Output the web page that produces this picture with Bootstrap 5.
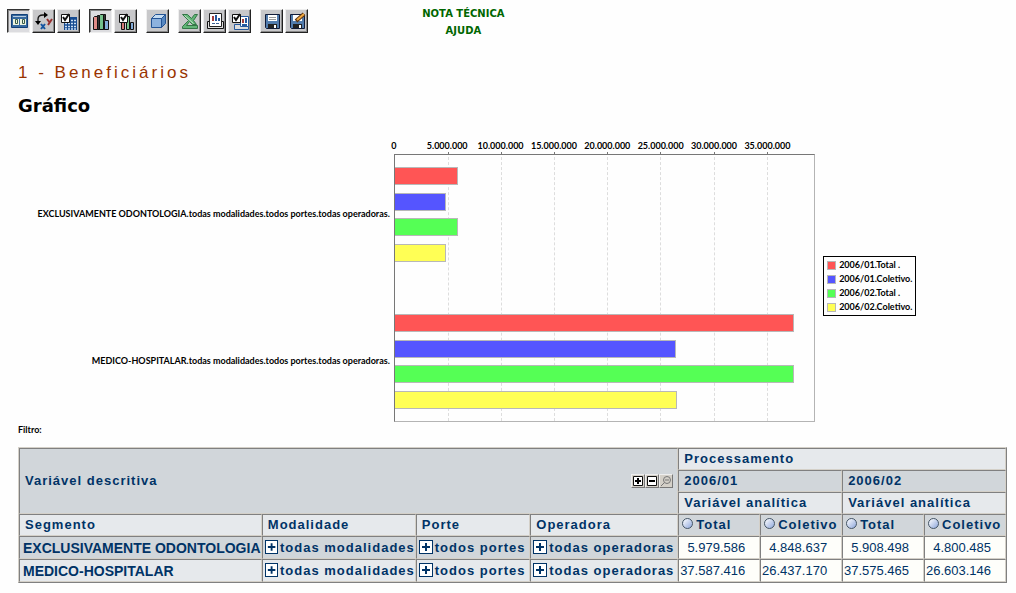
<!DOCTYPE html>
<html lang="pt-BR">
<head>
<meta charset="utf-8">
<meta name="viewport" content="width=device-width, initial-scale=1">
<title>Beneficiários</title>
<link href="https://cdn.jsdelivr.net/npm/bootstrap@5.3.0/dist/css/bootstrap.min.css" rel="stylesheet">
<style>
body { background: #fefefe; color: #000; font-family: "DejaVu Sans", sans-serif; }
.page-head { padding: 9px 7px 0; }
.tool-set { gap: 2px; }
.tool-row { gap: 9px; }
.tool { width: 23px; height: 24px; padding: 0; line-height: 0; background: #c8c8ca; border: 1px solid; border-color: #eee #222 #222 #eee; border-radius: 0; box-shadow: inset -1px -1px #888; }
.tool.active { background: #dcdcdf; border-color: #333 #eee #eee #333; box-shadow: inset 1px 1px #888; }
.tool svg { width: 20px; height: 20px; }
.help-links { margin-left: 11.4%; line-height: 17px; font-size: 10px; font-weight: bold; margin-top: -4px; }
.help-links a { color: #060; text-decoration: none; }
.content { padding: 0 9px 8px 18px; }
.topic { font: 17px/20px "Liberation Sans", sans-serif; letter-spacing: 3px; color: #930; margin: 24px 0 0; }
.section-title { font-size: 18px; line-height: 24px; font-weight: bold; margin: 11px 0 0; }
.chart { display: grid; grid-template-columns: 38% 42.6% 1fr; margin-top: 22px; font: bold 9px/12px Lato, sans-serif; }
.axis { grid-column: 2; height: 14px; }
.axis span { position: absolute; top: 0; transform: translateX(-50%); }
.names { grid-area: 2 / 1; }
.plot { grid-area: 2 / 2; }
.legend-area { grid-area: 2 / 3; padding-bottom: 4px; }
.names, .plot { padding: 12px 0; gap: 52px; }
.names { padding-right: 4px; text-align: right; }
.names div, .bar-set { height: 95px; }
.plot { border: 1px solid #b4b4b4; border-top-color: #777; border-left-color: #777; }
.grid-line { position: absolute; top: -3px; bottom: 0; border-left: 1px dashed #ddd; }
.grid-line::before { content: ""; position: absolute; left: -1px; top: 0; width: 1px; height: 3px; background: #777; }
.bar { height: 18px; border: 1px solid #b8b8b8; border-left: 0; position: relative; }
.c-red { background: #f55; } .c-blue { background: #55f; } .c-green { background: #5f5; } .c-yellow { background: #ff5; }
.legend-box { margin-left: 8px; border: 1px solid #000; padding: 1px 3px; line-height: 14px; }
.swatch { width: 9px; height: 9px; border: 1px solid #b8b8b8; margin-right: 3px; }
.filter { font: bold 9px/12px Lato, sans-serif; margin: 2px 0 11px; }
.cube { width: 100%; table-layout: fixed; border-collapse: separate; border-spacing: 0; border: 1px solid; border-color: #d4d0c8 #808080 #808080 #d4d0c8; font: bold 13px/16px "Liberation Sans", sans-serif; letter-spacing: 1px; color: #036; white-space: nowrap; }
.cube th, .cube td { border: 1px solid; border-color: #808080 #d4d0c8 #d4d0c8 #808080; background: #e6e9ec; padding: 2px 0 2px 5px; height: 22px; }
.cube .dim { background: #d1d6da; }
.cube tbody th, .cube tbody td { height: 23px; }
.cube .segment { font-size: 14px; letter-spacing: 0; padding-left: 3px; }
.cube .member { padding-left: 2px; }
.cube .value { background: #fefefa; font-weight: normal; text-align: right; padding: 0 14px 0 0; letter-spacing: 0; }
.cube .measure { padding-left: 3px; }
.measure div { gap: 3px; }
.w-seg { width: 24.6%; } .w-mod { width: 15.6%; } .w-por { width: 11.6%; } .w-ope { width: 15%; } .w-val { width: 8.3%; }
.member-line { gap: 2px; }
.expander { width: 14px; height: 14px; padding: 0; border: 1px solid #036; background: #fff; line-height: 0; }
.expander svg, .mini svg { display: block; width: 100%; height: 100%; }
.mini { width: 14px; height: 14px; padding: 0; background: #d4d0c8; border: 1px solid; border-color: #eee #777 #777 #eee; }
.sorter { width: 11px; height: 11px; padding: 0; margin-top: 1px; border: 1px solid #456; border-radius: 50%; background: linear-gradient(135deg, #fff, #8fa8dc); }
</style>
</head>
<body>
<header class="page-head d-flex align-items-start">
  <div class="tool-row d-flex" role="toolbar" aria-label="Ferramentas">
    <div class="tool-set d-flex">
      <button class="tool active" aria-label="Tabela"><svg viewBox="0 0 20 20"><path fill="#36699f" stroke="#124078" d="M2.500 3.500h16v13h-16z"/><path stroke="#b8ccdf" d="M4 5.500h13"/><path fill="#eef4df" d="M4 8h6v6H4zM11 8h6v6h-6z"/><path fill="none" stroke="#385c48" d="M6.500 8.500h2v4h-2zM13.500 8.500h2v4h-2z"/></svg></button>
      <button class="tool" aria-label="Trocar eixos"><svg viewBox="0 0 20 20"><path fill="none" stroke="#111" stroke-width="1.300" d="M4 11V8q0-4 5-4h2"/><path d="M10 1l4 3-4 3zM1 10h6l-3 4z"/><path fill="none" stroke="#1454a0" stroke-width="2" d="M7 13l4 5M11 13l-4 5"/><path fill="none" stroke="#973030" stroke-width="2" d="M13 8l3 4M18 8l-4 6"/></svg></button>
      <button class="tool" aria-label="Configurar tabela"><svg viewBox="0 0 20 20"><path fill="#164b91" d="M5 6h13v13H5z"/><path stroke="#ccdff4" stroke-width="1.500" stroke-dasharray="2 1" d="M6 12.500h11M6 15.500h11M6 18h11M12 9.500h5"/><path fill="#fff" stroke="#111" d="M2.500 3.500h8v8h-8z"/><path fill="none" stroke="#111" stroke-width="2" d="M4 6l2 3 4-6"/></svg></button>
    </div>
    <div class="tool-set d-flex">
      <button class="tool active" aria-label="Gráfico"><svg viewBox="0 0 20 20"><g stroke="#111"><path fill="#333" d="M6.500 4.500h2v14h-2zM12.500 3.500h2v15h-2z"/><path fill="#df8b87" d="M2.500 6.500l1-1h3v13h-4z"/><path fill="#73c18a" d="M8.500 4.500l1-1h3v15h-4z"/><path fill="#83acd8" d="M13.500 10.500l1-1h3v9h-4z"/></g></svg></button>
      <button class="tool" aria-label="Configurar gráfico"><svg viewBox="0 0 20 20"><path fill="#d87b78" stroke="#111" d="M5.500 10.500h3v8h-3z"/><path fill="#79c58b" stroke="#111" d="M10.500 5.500h3v13h-3z"/><path fill="#83acd8" stroke="#111" d="M14.500 11.500h3v7h-3z"/><path fill="#fff" stroke="#111" d="M3.500 3.500h8v8h-8z"/><path fill="none" stroke="#111" stroke-width="2" d="M5 6l2 3 4-6"/></svg></button>
    </div>
    <button class="tool" aria-label="Cubo"><svg viewBox="0 0 20 20"><g stroke="#245495"><path fill="#8db2de" d="M3.500 7.500h10v9h-10z"/><path fill="#c5dcf2" d="M3.500 7.500l4-4h10l-4 4z"/><path fill="#5788c1" d="M13.500 7.500l4-4v9l-4 4z"/></g></svg></button>
    <div class="tool-set d-flex">
      <button class="tool" aria-label="Exportar para planilha"><svg viewBox="0 0 20 20"><path fill="#62b577" stroke="#347747" d="M2.500 3.500h5l4 4 3-4h3l-4 6 3 4h-4l-3-3-3 4h11v3h-15v-2l6-6z"/><path stroke="#c2e6c8" d="M4.500 4.500l9 8"/></svg></button>
      <button class="tool" aria-label="Imprimir"><svg viewBox="0 0 20 20"><path fill="#ddd" stroke="#111" d="M2.500 10.500h16v7h-16z"/><path fill="#fff" stroke="#222" d="M4.500 2.500h12v13h-12z"/><path stroke="#a23c3c" stroke-width="2" d="M8 5v5"/><path stroke="#26599e" stroke-width="2" d="M11 4v6M14 7v3"/><path stroke="#3d6294" stroke-dasharray="3 1" d="M7 12.500h8"/></svg></button>
      <button class="tool" aria-label="Configurar impressão"><svg viewBox="0 0 20 20"><path fill="#ddd" stroke="#26599e" d="M4.500 13.500h14v5h-14z"/><path fill="#fff" stroke="#26599e" d="M10.500 5.500h8v10h-8z"/><path stroke="#a23c3c" stroke-width="2" d="M13 8v4"/><path stroke="#26599e" stroke-width="2" d="M16 7v5M12 14h5"/><path fill="#fff" stroke="#111" d="M2.500 3.500h8v8h-8z"/><path fill="none" stroke="#111" stroke-width="2" d="M4 6l2 3 4-6"/></svg></button>
    </div>
    <div class="tool-set d-flex">
      <button class="tool" aria-label="Salvar"><svg viewBox="0 0 20 20"><path fill="#527cad" stroke="#111b38" d="M3.500 3.500h14v14h-13l-1-1z"/><path fill="#fff" d="M6 4h9v6H6z"/><path stroke="#999" d="M7 6.500h7M7 8.500h7"/><path fill="#222" d="M6 13h9v4H6z"/><path fill="#fff" d="M12 14h2v3h-2z"/></svg></button>
      <button class="tool" aria-label="Salvar como"><svg viewBox="0 0 20 20"><path fill="#527cad" stroke="#111b38" d="M3.500 3.500h14v14h-13l-1-1z"/><path fill="#fff" d="M6 4h9v6H6z"/><path fill="#222" d="M6 13h9v4H6z"/><path fill="#fff" d="M12 14h2v3h-2z"/><path stroke="#5c3514" stroke-width="4" d="M9 10l8-7"/><path stroke="#f1a940" stroke-width="2" d="M10 9l7-6"/></svg></button>
    </div>
  </div>
  <nav class="help-links d-flex flex-column text-center" aria-label="Ajuda">
    <a href="#nota">NOTA TÉCNICA</a>
    <a href="#ajuda">AJUDA</a>
  </nav>
</header>
<main class="content">
  <h1 class="topic">1 - Beneficiários</h1>
  <h2 class="section-title">Gráfico</h2>
  <section class="chart" aria-label="Gráfico de beneficiários">
    <div class="axis position-relative">
      <span style="left:0%">0</span><span style="left:12.67%">5.000.000</span><span style="left:25.34%">10.000.000</span><span style="left:38.01%">15.000.000</span><span style="left:50.68%">20.000.000</span><span style="left:63.34%">25.000.000</span><span style="left:76.01%">30.000.000</span><span style="left:88.68%">35.000.000</span>
    </div>
    <div class="names d-flex flex-column text-nowrap">
      <div class="d-flex align-items-center justify-content-end">EXCLUSIVAMENTE ODONTOLOGIA.todas modalidades.todos portes.todas operadoras.</div>
      <div class="d-flex align-items-center justify-content-end">MEDICO-HOSPITALAR.todas modalidades.todos portes.todas operadoras.</div>
    </div>
    <div class="plot position-relative d-flex flex-column">
      <i class="grid-line" style="left:12.67%"></i><i class="grid-line" style="left:25.34%"></i><i class="grid-line" style="left:38.01%"></i><i class="grid-line" style="left:50.68%"></i><i class="grid-line" style="left:63.34%"></i><i class="grid-line" style="left:76.01%"></i><i class="grid-line" style="left:88.68%"></i>
      <div class="bar-set d-flex flex-column justify-content-between">
        <div class="bar c-red" style="width:15.15%"></div><div class="bar c-blue" style="width:12.29%"></div><div class="bar c-green" style="width:14.97%"></div><div class="bar c-yellow" style="width:12.16%"></div>
      </div>
      <div class="bar-set d-flex flex-column justify-content-between">
        <div class="bar c-red" style="width:95.24%"></div><div class="bar c-blue" style="width:66.99%"></div><div class="bar c-green" style="width:95.21%"></div><div class="bar c-yellow" style="width:67.41%"></div>
      </div>
    </div>
    <div class="legend-area d-flex align-items-center">
      <div class="legend-box text-nowrap">
        <div class="d-flex align-items-center"><i class="swatch c-red"></i>2006/01.Total .</div>
        <div class="d-flex align-items-center"><i class="swatch c-blue"></i>2006/01.Coletivo.</div>
        <div class="d-flex align-items-center"><i class="swatch c-green"></i>2006/02.Total .</div>
        <div class="d-flex align-items-center"><i class="swatch c-yellow"></i>2006/02.Coletivo.</div>
      </div>
    </div>
  </section>
  <p class="filter">Filtro:</p>
  <table class="cube">
    <colgroup><col class="w-seg"><col class="w-mod"><col class="w-por"><col class="w-ope"><col class="w-val"><col class="w-val"><col class="w-val"><col class="w-val"></colgroup>
    <thead>
      <tr><th class="dim" colspan="4" rowspan="3"><div class="d-flex align-items-center justify-content-between pe-1"><span>Variável descritiva</span><span class="d-flex"><button class="mini" aria-label="Expandir"><svg viewBox="0 0 12 12"><path fill="#fff" stroke="#111" d="M1.500 1.500h9v9h-9z"/><path stroke="#000" stroke-width="2" d="M3 6h6M6 3v6"/></svg></button><button class="mini" aria-label="Recolher"><svg viewBox="0 0 12 12"><path fill="#fff" stroke="#111" d="M1.500 1.500h9v9h-9z"/><path stroke="#000" stroke-width="2" d="M3 6h6"/></svg></button><button class="mini" aria-label="Detalhar"><svg viewBox="0 0 12 12"><circle cx="7" cy="5" r="3.500" fill="none" stroke="#777"/><path stroke="#777" d="M5 5h4M4.500 7.500L1 11"/></svg></button></span></div></th><th colspan="4">Processamento</th></tr>
      <tr><th class="dim" colspan="2">2006/01</th><th class="dim" colspan="2">2006/02</th></tr>
      <tr><th colspan="2">Variável analítica</th><th colspan="2">Variável analítica</th></tr>
      <tr><th>Segmento</th><th>Modalidade</th><th>Porte</th><th>Operadora</th>
        <th class="dim measure"><div class="d-flex"><button class="sorter" aria-label="Ordenar por Total 2006/01"></button>Total</div></th><th class="dim measure"><div class="d-flex"><button class="sorter" aria-label="Ordenar por Coletivo 2006/01"></button>Coletivo</div></th><th class="dim measure"><div class="d-flex"><button class="sorter" aria-label="Ordenar por Total 2006/02"></button>Total</div></th><th class="dim measure"><div class="d-flex"><button class="sorter" aria-label="Ordenar por Coletivo 2006/02"></button>Coletivo</div></th></tr>
    </thead>
    <tbody>
      <tr><th class="dim segment">EXCLUSIVAMENTE ODONTOLOGIA</th>
        <th class="dim member"><div class="d-flex member-line"><button class="expander" aria-label="Expandir modalidades"><svg viewBox="0 0 12 12"><path stroke="#036" stroke-width="2" d="M2 6h8M6 2v8"/></svg></button><span>todas modalidades</span></div></th>
        <th class="dim member"><div class="d-flex member-line"><button class="expander" aria-label="Expandir portes"><svg viewBox="0 0 12 12"><path stroke="#036" stroke-width="2" d="M2 6h8M6 2v8"/></svg></button><span>todos portes</span></div></th>
        <th class="dim member"><div class="d-flex member-line"><button class="expander" aria-label="Expandir operadoras"><svg viewBox="0 0 12 12"><path stroke="#036" stroke-width="2" d="M2 6h8M6 2v8"/></svg></button><span>todas operadoras</span></div></th>
        <td class="value">5.979.586</td><td class="value">4.848.637</td><td class="value">5.908.498</td><td class="value">4.800.485</td></tr>
      <tr><th class="segment">MEDICO-HOSPITALAR</th>
        <th class="member"><div class="d-flex member-line"><button class="expander" aria-label="Expandir modalidades"><svg viewBox="0 0 12 12"><path stroke="#036" stroke-width="2" d="M2 6h8M6 2v8"/></svg></button><span>todas modalidades</span></div></th>
        <th class="member"><div class="d-flex member-line"><button class="expander" aria-label="Expandir portes"><svg viewBox="0 0 12 12"><path stroke="#036" stroke-width="2" d="M2 6h8M6 2v8"/></svg></button><span>todos portes</span></div></th>
        <th class="member"><div class="d-flex member-line"><button class="expander" aria-label="Expandir operadoras"><svg viewBox="0 0 12 12"><path stroke="#036" stroke-width="2" d="M2 6h8M6 2v8"/></svg></button><span>todas operadoras</span></div></th>
        <td class="value">37.587.416</td><td class="value">26.437.170</td><td class="value">37.575.465</td><td class="value">26.603.146</td></tr>
    </tbody>
  </table>
</main>
<script src="https://cdn.jsdelivr.net/npm/bootstrap@5.3.0/dist/js/bootstrap.bundle.min.js"></script>
</body>
</html>
